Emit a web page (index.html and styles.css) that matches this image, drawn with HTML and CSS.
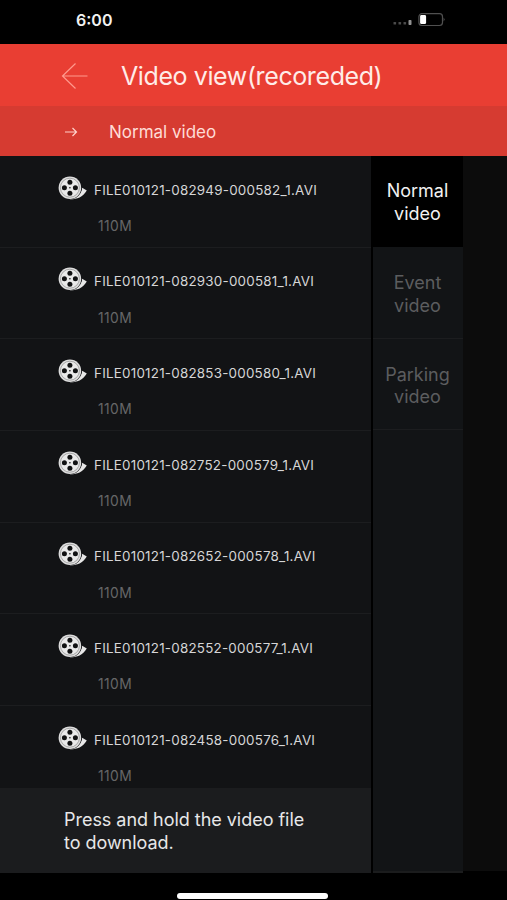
FILE: index.html
```html
<!DOCTYPE html>
<html lang="en">
<head>
<meta charset="utf-8">
<title>Video view</title>
<link rel="stylesheet" href="styles.css">
</head>
<body>
<svg class="defs" width="0" height="0" aria-hidden="true">
  <symbol id="reel" viewBox="0 0 29 24">
    <path d="M11.900 23.400C18.500 23.600 24.500 21.500 28.800 14.600L24.200 11.800C24 16 20 21.500 11.900 22Z" fill="#e6e6e6"/>
    <circle cx="11.900" cy="11.700" r="11.900" fill="#121315"/>
    <circle cx="11.900" cy="11.700" r="11.300" fill="#dedede"/>
    <circle cx="11.900" cy="11.700" r="9.500" fill="#e9e9e9" stroke="#8c8c8c" stroke-width=".7"/>
    <g fill="#101112">
      <circle cx="11.900" cy="6.200" r="2.500"/><circle cx="6.400" cy="11.700" r="2.500"/>
      <circle cx="17.400" cy="11.700" r="2.500"/><circle cx="11.900" cy="17.200" r="2.500"/>
      <circle cx="11.900" cy="11.700" r=".8"/>
    </g>
  </symbol>
</svg>
<header class="status">
  <span class="time">6:00</span>
  <svg class="indicators" width="54" height="16" viewBox="0 0 54 16">
    <g fill="#4b4b4b"><rect x="1.500" y="10" width="2.600" height="2.600" rx=".6"/><rect x="6.500" y="10" width="2.600" height="2.600" rx=".6"/><rect x="11.500" y="10" width="2.600" height="2.600" rx=".6"/></g>
    <rect x="16.500" y="8" width="3" height="5" rx=".7" fill="#919191"/>
    <rect x="26.900" y="1.700" width="23.600" height="11.800" rx="3" fill="none" stroke="#505050" stroke-width="1.200"/>
    <rect x="28.100" y="3.100" width="6" height="9" rx="1.300" fill="#fff"/>
    <path d="M51.700 5.600Q53.500 7.500 51.700 9.500Z" fill="#686868"/>
  </svg>
</header>
<div class="titlebar">
  <svg class="back" width="28" height="28" viewBox="0 0 28 28"><path d="M14.500 1.500L1.500 14L14.500 26.500M1.500 14H26.500"/></svg>
  <h1>Video view(recoreded)</h1>
</div>
<div class="subbar">
  <svg class="arrow" width="14" height="12" viewBox="0 0 14 12"><path d="M1 6H12.500M8.500 2L12.500 6L8.500 10"/></svg>
  <span>Normal video</span>
</div>
<main>
  <section class="files">
    <ul>
      <li><div class="file"><svg class="reel"><use href="#reel"/></svg><span>FILE010121-082949-000582_1.AVI</span></div><p>110M</p></li>
      <li><div class="file"><svg class="reel"><use href="#reel"/></svg><span>FILE010121-082930-000581_1.AVI</span></div><p>110M</p></li>
      <li><div class="file"><svg class="reel"><use href="#reel"/></svg><span>FILE010121-082853-000580_1.AVI</span></div><p>110M</p></li>
      <li><div class="file"><svg class="reel"><use href="#reel"/></svg><span>FILE010121-082752-000579_1.AVI</span></div><p>110M</p></li>
      <li><div class="file"><svg class="reel"><use href="#reel"/></svg><span>FILE010121-082652-000578_1.AVI</span></div><p>110M</p></li>
      <li><div class="file"><svg class="reel"><use href="#reel"/></svg><span>FILE010121-082552-000577_1.AVI</span></div><p>110M</p></li>
      <li><div class="file"><svg class="reel"><use href="#reel"/></svg><span>FILE010121-082458-000576_1.AVI</span></div><p>110M</p></li>
    </ul>
    <div class="hint">Press and hold the video file<br>to download.</div>
  </section>
  <nav>
    <div class="tab active">Normal<br>video</div>
    <div class="tab">Event<br>video</div>
    <div class="tab">Parking<br>video</div>
  </nav>
  <aside></aside>
</main>
<footer><div class="home"></div></footer>
</body>
</html>
```

FILE: styles.css
```css
* { box-sizing: border-box; }
body {
  margin: 0;
  width: 507px;
  height: 900px;
  overflow: hidden;
  display: flex;
  flex-direction: column;
  background: #000;
  color: #fff;
  font-family: Inter, "Liberation Sans", sans-serif;
}
.defs { position: absolute; }
.status {
  height: 44px;
  flex: none;
  display: flex;
  justify-content: space-between;
  padding: 12px 61px 0 76px;
}
.time { font-size: 16px; line-height: 16px; font-weight: 600; color: #f2f2f2; }
.titlebar {
  height: 62px;
  flex: none;
  display: flex;
  align-items: center;
  padding: 2px 0 0 61px;
  background: #e93e33;
}
.back path { fill: none; stroke: #ff998d; stroke-width: 1.2; }
h1 {
  margin: 0 0 0 32px;
  font-size: 25px;
  line-height: 30px;
  font-weight: 400;
  letter-spacing: -.4px;
  color: #ffece8;
  white-space: nowrap;
}
.subbar {
  height: 50px;
  flex: none;
  display: flex;
  align-items: center;
  padding: 2px 0 0 64px;
  background: #d63b31;
  color: #ffdcd6;
  font-size: 17px;
}
.subbar span { margin-left: 31px; }
.arrow path { fill: none; stroke: #ffd2cb; stroke-width: 1.2; }
main { height: 716px; flex: none; display: flex; }
.files {
  width: 373px;
  height: 717px;
  display: flex;
  flex-direction: column;
  border-right: 2px solid #000;
  background: #121315;
}
ul { list-style: none; margin: 0; padding: 0; height: 632px; overflow: hidden; }
li { height: 91.7px; padding: 19px 0 0 58px; border-bottom: 1px solid #1c1d1f; }
.file { display: flex; align-items: center; height: 25px; }
.reel { width: 29px; height: 24px; flex: none; }
.file span {
  margin: 4px 0 0 7px;
  font-size: 13.4px;
  line-height: 18px;
  letter-spacing: .23px;
  color: #d6d6d7;
  white-space: nowrap;
}
li p {
  margin: 17px 0 0 40px;
  font-size: 13.8px;
  line-height: 18px;
  letter-spacing: .4px;
  color: #666768;
}
.hint {
  flex: 1;
  padding: 21px 0 0 64px;
  background: #1b1c1e;
  color: #e7e7e8;
  font-size: 18px;
  line-height: 22.5px;
  letter-spacing: -.03px;
}
nav { width: 90px; height: 717px; background: #121416; border-bottom: 2px solid #1b1c1d; }
.tab {
  height: 91.7px;
  padding: 25px 1px 0 0;
  border-bottom: 1px solid #1c1d1f;
  text-align: center;
  font-size: 18px;
  line-height: 22.5px;
  color: #5c5d5f;
}
.tab.active { height: 91px; padding-top: 24px; background: #000; border-color: #000; color: #f2f2f2; }
aside { width: 44px; height: 715px; background: #0c0c0c; }
footer { flex: 1; display: flex; justify-content: center; padding-top: 21px; }
.home { width: 151px; height: 6px; margin-left: -3px; border-radius: 3px; background: #fff; }
```
